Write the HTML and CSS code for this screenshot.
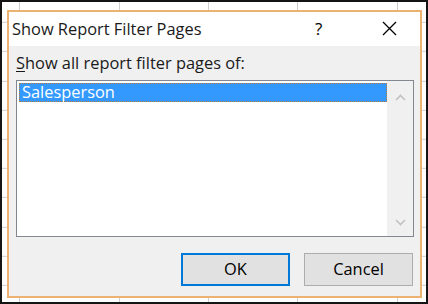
FILE: index.html
```html
<!DOCTYPE html>
<html>
<head>
  <title>Show Report Filter Pages</title>
  <link rel="stylesheet" href="styles.css">
</head>
<body>
  <div class="dialog">
    <div class="titlebar">
      <span class="title">Show Report Filter Pages</span>
      <span class="help">?</span>
      <span class="close">
        <svg width="15" height="15" viewBox="0 0 15 15"><path d="M1 1 L14 14 M14 1 L1 14" stroke="#000" stroke-width="1.3" fill="none"/></svg>
      </span>
    </div>
    <div class="content">
      <div class="label"><u>S</u>how all report filter pages of:</div>
      <div class="listbox">
        <div class="items">
          <div class="item selected">Salesperson</div>
        </div>
        <div class="scrollbar">
          <svg width="11" height="7" viewBox="0 0 11 7"><path d="M1 6 L5.5 1.5 L10 6" stroke="#c2c2c2" stroke-width="1.6" fill="none"/></svg>
          <svg width="11" height="7" viewBox="0 0 11 7"><path d="M1 1 L5.5 5.5 L10 1" stroke="#c2c2c2" stroke-width="1.6" fill="none"/></svg>
        </div>
      </div>
      <div class="buttons">
        <div class="btn default">OK</div>
        <div class="btn">Cancel</div>
      </div>
    </div>
  </div>
</body>
</html>
```

FILE: styles.css
```css
html, body {
  margin: 0;
}
body {
  box-sizing: border-box;
  width: 428px;
  height: 304px;
  border: 2px solid #141414;
  background-color: #fff;
  background-image:
    linear-gradient(#cfcfcf, #cfcfcf),
    linear-gradient(#cfcfcf, #cfcfcf),
    linear-gradient(#cfcfcf, #cfcfcf),
    linear-gradient(#cfcfcf, #cfcfcf),
    linear-gradient(#cfcfcf, #cfcfcf),
    repeating-linear-gradient(180deg, transparent 0 28.2px, #cfcfcf 28.2px 29.2px);
  background-size: 1px 100%, 1px 100%, 1px 100%, 1px 100%, 1px 100%, 100% 100%;
  background-position: 19px 0, 119px 0, 208px 0, 297px 0, 397px 0, 0 -6.2px;
  background-repeat: no-repeat, no-repeat, no-repeat, no-repeat, no-repeat, repeat;
  font-family: "Open Sans", "Noto Sans", sans-serif;
  font-size: 16.4px;
  color: #000;
  overflow: hidden;
}
.dialog {
  box-sizing: border-box;
  width: 415px;
  height: 288px;
  margin: 8px 0 0 5px;
  border: 2px solid #ecb271;
  background: #f0f0f0;
  display: flex;
  flex-direction: column;
}
.titlebar {
  height: 34px;
  background: #fff;
  display: flex;
  align-items: center;
  padding-left: 3px;
}
.title {
  flex: 1;
  color: #1a1a1a;
  padding-bottom: 2px;
}
.help {
  width: 14px;
  font-size: 17px;
  padding-bottom: 2px;
  margin-right: 53px;
}
.close {
  display: flex;
  margin-right: 23px;
  padding-bottom: 1px;
}
.content {
  flex: 1;
  padding: 0 6px 0 7px;
  display: flex;
  flex-direction: column;
}
.label {
  height: 34px;
  line-height: 20px;
  padding-top: 7px;
  box-sizing: border-box;
  color: #1a1a1a;
}
.label u {
  text-underline-offset: 2px;
}
.listbox {
  box-sizing: border-box;
  width: 398px;
  height: 157px;
  border: 1px solid #828790;
  background: #fff;
  display: flex;
}
.items {
  flex: 1;
  padding: 2px 0 0 2px;
}
.item {
  height: 19px;
  line-height: 18px;
  padding-left: 3px;
  box-sizing: border-box;
}
.item.selected {
  background: #3399ff;
  color: #fff;
  outline: 1px dotted #b87a3c;
  outline-offset: -1px;
}
.scrollbar {
  width: 26px;
  background: #f0f0f0;
  display: flex;
  flex-direction: column;
  justify-content: space-between;
  align-items: center;
  padding: 13px 0 10px;
}
.buttons {
  display: flex;
  justify-content: flex-end;
  gap: 14px;
  margin-top: 16px;
  padding-right: 1px;
}
.btn {
  box-sizing: border-box;
  width: 109px;
  height: 33px;
  background: #e1e1e1;
  border: 1px solid #adadad;
  display: flex;
  align-items: center;
  justify-content: center;
  padding-bottom: 2px;
}
.btn.default {
  border: 2px solid #0078d7;
}
```
